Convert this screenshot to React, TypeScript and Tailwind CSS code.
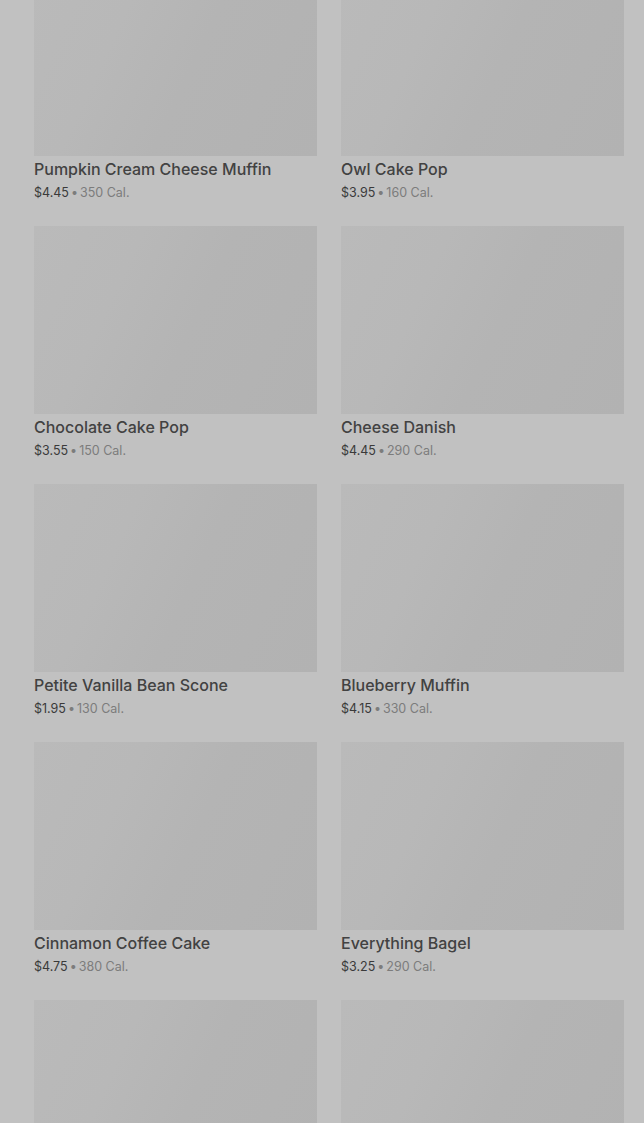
const items = [
  { name: "Pumpkin Cream Cheese Muffin", price: "$4.45", cal: "350 Cal." },
  { name: "Owl Cake Pop", price: "$3.95", cal: "160 Cal." },
  { name: "Chocolate Cake Pop", price: "$3.55", cal: "150 Cal." },
  { name: "Cheese Danish", price: "$4.45", cal: "290 Cal." },
  { name: "Petite Vanilla Bean Scone", price: "$1.95", cal: "130 Cal." },
  { name: "Blueberry Muffin", price: "$4.15", cal: "330 Cal." },
  { name: "Cinnamon Coffee Cake", price: "$4.75", cal: "380 Cal." },
  { name: "Everything Bagel", price: "$3.25", cal: "290 Cal." },
  { name: "", price: "", cal: "" },
  { name: "", price: "", cal: "" },
];

function Card({ name, price, cal }: { name: string; price: string; cal: string }) {
  return (
    <div>
      <div className="h-[188px] bg-[linear-gradient(115deg,#bababa_0%,#b8b8b8_30%,#b4b4b4_55%,#b2b2b2_100%)]" />
      {name && (
        <>
          <div className="mt-[1px] text-[16px] leading-[24px] font-medium text-[#424242]">{name}</div>
          <div className="mt-[3px] text-[12.5px] leading-[18px] text-[#3a3a3a]">
            {price}
            <span className="text-[#7c7c7c]">
              <span className="mx-[2px]">•</span>
              {cal}
            </span>
          </div>
        </>
      )}
    </div>
  );
}

export default function App() {
  return (
    <div
      className="min-h-[1123px] bg-[#c1c1c1] overflow-hidden"
      style={{ fontFamily: "Inter, 'Noto Sans', sans-serif" }}
    >
      <div className="mt-[-32px] pl-[34px] pr-[20px] grid grid-cols-2 gap-x-6 gap-y-6">
        {items.map((item, i) => (
          <Card key={i} {...item} />
        ))}
      </div>
    </div>
  );
}
